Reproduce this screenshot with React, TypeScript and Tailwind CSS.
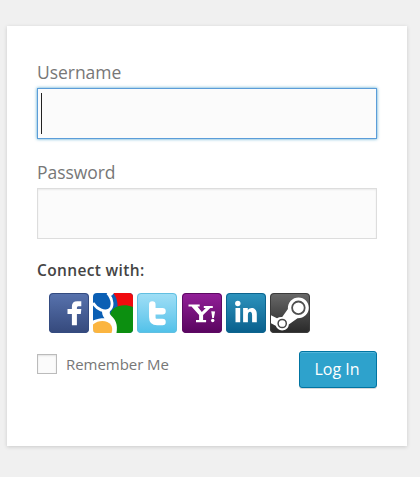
import { useState } from 'react';
import type { ReactNode } from 'react';

interface Provider {
  name: string;
  className: string;
  icon: ReactNode;
}

const providers: Provider[] = [
  {
    name: 'Facebook',
    className: 'bg-linear-to-b from-[#5873ae] to-[#35497c] border-[#344b80]',
    icon: (
      <path
        d="M22.900 32.300V21h-4.400v-4.900h4.400v-2.500c0-3.500 1.800-5.300 5.400-5.300h4v5h-2.400c-1.500 0-2 .6-2 1.900v.9h4.400l-.5 4.900h-3.900v11.300z"
        fill="#fff"
      />
    ),
  },
  {
    name: 'Google',
    className: 'bg-[#0b5fb4] border-transparent',
    icon: (
      <>
        <path d="M20 0h20v16H24.500C25 9 23.500 4 20 0z" fill="#f00a0e" />
        <path d="M40 14V40H20V27l-3-5c1.500-9 13-12 23-8z" fill="#0c8f10" />
        {/* White "g" over the coloured fields */}
        <path
          d="M14.500 0c5.500 6 6 14.500 1.500 17C11.500 19.500 4 16.500 0 10"
          fill="none"
          stroke="#fff"
          strokeWidth="2.800"
        />
        <path d="M14 0h7l-2 2.500-2.500.5z" fill="#fff" />
        <path d="M9 18l9-2c-1.500 3-2 4.500.5 7 4 3.500 6.500 8.500 5 17H0V27.500c4-1.800 7.500-2.300 11.500-2.300C9.500 23 9 20.500 9 18z" fill="#fff" />
        <path d="M0 31.500c5.500-4.800 14.500-4.500 18 .5 1.500 2.300 1.500 5.500.5 8H0z" fill="#fbb540" />
      </>
    ),
  },
  {
    name: 'Twitter',
    className: 'bg-linear-to-b from-[#a0dff6] to-[#4fc1e9] border-[#61bfe1]',
    icon: (
      <path
        d="M15.300 11.500v12.500c0 3.500 1.600 5 4.900 5H25.500M16 18.300h9.500"
        fill="none"
        stroke="#fff"
        strokeWidth="6.500"
        strokeLinecap="round"
        strokeLinejoin="round"
      />
    ),
  },
  {
    name: 'Yahoo',
    className: 'bg-linear-to-b from-[#94209a] to-[#59055f] border-[#5d0a63]',
    icon: (
      <g fill="#fff">
        <path d="M6.500 11.500h11.200v2h-2.200l4.300 5.500 4-4h-2v-2h9v2h-2.500l-7.200 7v5h3v2.200H14v-2.200h3.100v-5L9.500 13.500h-3z" />
        <path d="m29.300 18.200 3.800.2-1.200 6.500h-1.700z" />
        <circle cx="30.700" cy="27.500" r="1.700" />
      </g>
    ),
  },
  {
    name: 'LinkedIn',
    className: 'bg-linear-to-b from-[#2d94be] to-[#075f8c] border-[#0d648e]',
    icon: (
      <g fill="#fff">
        <circle cx="11.800" cy="10.500" r="2.700" />
        <path d="M9.500 15.100h4.700v14.100H9.500zM17.100 15.100h4.700v1.900c2.500-3.600 9-2.500 9 3.900v8.300h-4.700v-7.300c0-4.200-4.200-3.900-4.200 0v7.300h-4.800z" />
      </g>
    ),
  },
  {
    name: 'Steam',
    className: 'bg-linear-to-b from-[#6a6a6a] to-[#292929] border-[#3b3b3b]',
    icon: (
      <>
        <path
          d="M.5 22l6.500 3.200c1.600-1 3.300-1.400 5.200-1.200l5.700-8c-.4-6.700 4.500-11.600 10.600-11.600 5.900 0 10.300 4.600 10.300 10.300 0 6.100-5.100 10.700-11.300 10.500l-8.700 6.300c-.2 3.500-3.200 5.900-6.700 5.900-3.100 0-5.500-2-6.400-4.700L.5 30z"
          fill="#fff"
        />
        <circle cx="28.400" cy="14.800" r="6.300" fill="none" stroke="#505050" strokeWidth="1.800" />
        <circle cx="12.200" cy="30.500" r="4.100" fill="none" stroke="#494949" strokeWidth="1.500" />
      </>
    ),
  },
];

function SocialButton({ provider }: { provider: Provider }) {
  return (
    <button
      type="button"
      aria-label={provider.name}
      className={`relative size-10 overflow-hidden rounded-[4px] ${provider.className}`}
    >
      <svg viewBox="0 0 40 40" className="block size-10">
        {provider.icon}
      </svg>
      {provider.name !== 'Google' && (
        <span className="absolute inset-0 rounded-[4px] border border-inherit" />
      )}
    </button>
  );
}

export default function App() {
  const [username, setUsername] = useState('');
  const [password, setPassword] = useState('');
  const [remember, setRemember] = useState(false);

  return (
    <div className="h-[477px] w-[420px] overflow-hidden bg-[#f0f0f0] pt-[26px] pl-[7px] font-['Open_Sans',sans-serif]">
      <form
        className="h-[420px] w-[400px] bg-white px-[30px] pt-[34px] shadow-[0_1px_4px_rgba(0,0,0,0.16)]"
        onSubmit={(e) => e.preventDefault()}
      >
        {/* Username */}
        <label htmlFor="username" className="block h-7 text-[17.5px] leading-[25px] tracking-[-0.05px] text-[#777]">
          Username
        </label>
        <div className="relative">
          <input
            id="username"
            value={username}
            onChange={(e) => setUsername(e.target.value)}
            className="block h-[51px] w-full border border-[#5b9dd9] bg-[#fbfbfb] px-1 text-2xl shadow-[0_0_3px_rgba(30,140,190,0.8)] outline-none"
          />
          {/* Text cursor */}
          {!username && <span className="absolute top-[5px] left-1 h-[41px] w-px bg-[#222]" />}
        </div>

        {/* Password */}
        <label htmlFor="password" className="mt-[21px] block h-7 text-[17.5px] leading-[25px] tracking-[-0.05px] text-[#777]">
          Password
        </label>
        <input
          id="password"
          type="password"
          value={password}
          onChange={(e) => setPassword(e.target.value)}
          className="block h-[51px] w-full border border-[#ddd] bg-[#fbfbfb] px-1 text-2xl shadow-[inset_0_1px_2px_rgba(0,0,0,0.07)] outline-none"
        />

        {/* Social logins */}
        <p className="mt-[19px] h-6 text-[15.5px] leading-6 font-semibold tracking-[0.35px] text-[#444]">Connect with:</p>
        <div className="mt-[11px] ml-3 flex gap-[4.200px]">
          {providers.map((provider) => (
            <SocialButton key={provider.name} provider={provider} />
          ))}
        </div>

        <div className="mt-[18px] flex items-start justify-between">
          <label className="mt-[3px] flex items-center gap-[9px] text-[15px] leading-5 tracking-[-0.05px] text-[#777]">
            <input
              type="checkbox"
              checked={remember}
              onChange={(e) => setRemember(e.target.checked)}
              className="size-5 appearance-none border border-[#bbb] bg-[#fbfbfb] shadow-[inset_0_1px_2px_rgba(0,0,0,0.1)] checked:bg-[#2ea2cc]"
            />
            Remember Me
          </label>
          <button
            type="submit"
            className="h-[37px] w-[78px] rounded-[3px] border border-[#0074a2] bg-[#2ea2cc] pr-0.5 pb-0.5 text-base text-white shadow-[inset_0_1px_0_rgba(120,200,230,0.5),0_1px_0_rgba(0,0,0,0.15)]"
          >
            Log In
          </button>
        </div>
      </form>
    </div>
  );
}
